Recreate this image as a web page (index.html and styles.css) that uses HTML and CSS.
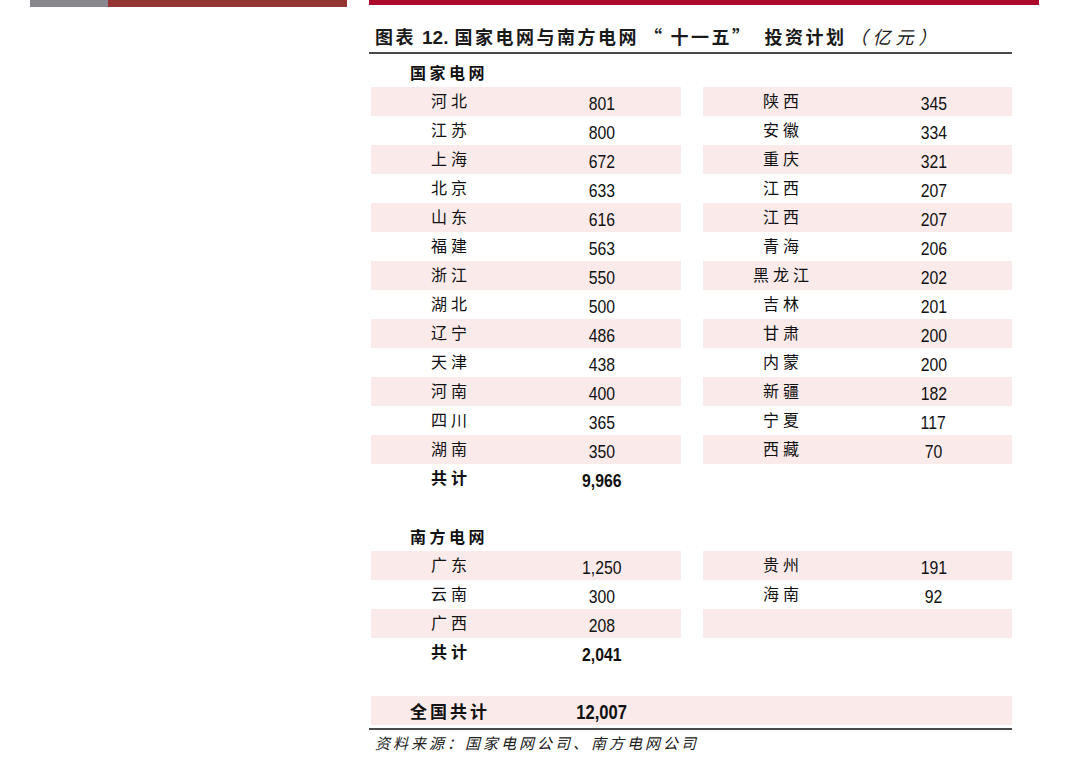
FILE: index.html
```html
<!DOCTYPE html>
<html lang="zh-CN">
<head>
<meta charset="utf-8">
<title>国家电网与南方电网“十一五”投资计划</title>
<link rel="stylesheet" href="styles.css">
</head>
<body>
<div class="page">
  <div class="side">
    <div class="side-bar"><span class="grey"></span><span class="brown"></span></div>
  </div>
  <div class="main">
    <div class="redbar"></div>
    <div class="content">
      <h1 class="title">图表<span class="fig">12.</span>国家电网与南方电网<span class="lq">“</span>十一五<span class="rq">”</span>投资计划<span class="unit">（亿元）</span></h1>
      <div class="table">
        <div class="row"><div class="group">国家电网</div></div>

        <div class="row"><div class="cell fill"><span class="name">河北</span><span class="val"><span>801</span></span></div><div class="cell fill"><span class="name">陕西</span><span class="val"><span>345</span></span></div></div>
        <div class="row"><div class="cell"><span class="name">江苏</span><span class="val"><span>800</span></span></div><div class="cell"><span class="name">安徽</span><span class="val"><span>334</span></span></div></div>
        <div class="row"><div class="cell fill"><span class="name">上海</span><span class="val"><span>672</span></span></div><div class="cell fill"><span class="name">重庆</span><span class="val"><span>321</span></span></div></div>
        <div class="row"><div class="cell"><span class="name">北京</span><span class="val"><span>633</span></span></div><div class="cell"><span class="name">江西</span><span class="val"><span>207</span></span></div></div>
        <div class="row"><div class="cell fill"><span class="name">山东</span><span class="val"><span>616</span></span></div><div class="cell fill"><span class="name">江西</span><span class="val"><span>207</span></span></div></div>
        <div class="row"><div class="cell"><span class="name">福建</span><span class="val"><span>563</span></span></div><div class="cell"><span class="name">青海</span><span class="val"><span>206</span></span></div></div>
        <div class="row"><div class="cell fill"><span class="name">浙江</span><span class="val"><span>550</span></span></div><div class="cell fill"><span class="name">黑龙江</span><span class="val"><span>202</span></span></div></div>
        <div class="row"><div class="cell"><span class="name">湖北</span><span class="val"><span>500</span></span></div><div class="cell"><span class="name">吉林</span><span class="val"><span>201</span></span></div></div>
        <div class="row"><div class="cell fill"><span class="name">辽宁</span><span class="val"><span>486</span></span></div><div class="cell fill"><span class="name">甘肃</span><span class="val"><span>200</span></span></div></div>
        <div class="row"><div class="cell"><span class="name">天津</span><span class="val"><span>438</span></span></div><div class="cell"><span class="name">内蒙</span><span class="val"><span>200</span></span></div></div>
        <div class="row"><div class="cell fill"><span class="name">河南</span><span class="val"><span>400</span></span></div><div class="cell fill"><span class="name">新疆</span><span class="val"><span>182</span></span></div></div>
        <div class="row"><div class="cell"><span class="name">四川</span><span class="val"><span>365</span></span></div><div class="cell"><span class="name">宁夏</span><span class="val"><span>117</span></span></div></div>
        <div class="row"><div class="cell fill"><span class="name">湖南</span><span class="val"><span>350</span></span></div><div class="cell fill"><span class="name">西藏</span><span class="val"><span>70</span></span></div></div>
        <div class="row"><div class="cell sum"><span class="name">共计</span><span class="val"><span>9,966</span></span></div><div class="cell"></div></div>
        <div class="row"></div>

        <div class="row"><div class="group">南方电网</div></div>
        <div class="row"><div class="cell fill"><span class="name">广东</span><span class="val"><span>1,250</span></span></div><div class="cell fill"><span class="name">贵州</span><span class="val"><span>191</span></span></div></div>
        <div class="row"><div class="cell"><span class="name">云南</span><span class="val"><span>300</span></span></div><div class="cell"><span class="name">海南</span><span class="val"><span>92</span></span></div></div>
        <div class="row"><div class="cell fill"><span class="name">广西</span><span class="val"><span>208</span></span></div><div class="cell fill"></div></div>
        <div class="row"><div class="cell sum"><span class="name">共计</span><span class="val"><span>2,041</span></span></div><div class="cell"></div></div>
        <div class="row"></div>

        <div class="row"><div class="cell fill grand"><span class="gname">全国共计</span><span class="val"><span>12,007</span></span></div></div>
      </div>
      <p class="source">资料来源：国家电网公司、南方电网公司</p>
    </div>
  </div>
</div>
</body>
</html>
```

FILE: styles.css
```css
html, body {
  margin: 0;
  padding: 0;
  background: #ffffff;
}

body {
  font-family: "Noto Sans CJK SC", "Liberation Sans", sans-serif;
  color: #111111;
}

.page {
  display: flex;
  padding-left: 30px;
}

.side {
  width: 317px;
  flex: none;
}

.side-bar {
  display: flex;
  height: 7px;
}

.side-bar .grey {
  width: 78px;
  background: #88878d;
}

.side-bar .brown {
  flex: 1;
  background: #953634;
}

.main {
  margin-left: 22px;
  width: 670px;
  flex: none;
}

.redbar {
  height: 5px;
  background: #ad0a2b;
}

.content {
  width: 643px;
}

.title {
  margin: 18px 0 0 0;
  padding: 0 0 1px 6px;
  height: 28px;
  overflow: hidden;
  font-size: 18px;
  font-weight: 700;
  line-height: 26px;
  letter-spacing: 2.5px;
  color: #1a1a1a;
  border-bottom: 2px solid #4a4a4a;
  white-space: nowrap;
}

.title .fig {
  font-family: "Liberation Sans", sans-serif;
  font-weight: 700;
  font-size: 19px;
  line-height: 20px;
  letter-spacing: 0;
  margin: 0 6px 0 6px;
}

.title .lq {
  margin-left: 5px;
  margin-right: 6px;
}

.title .rq {
  margin-left: 0;
  margin-right: 12px;
}

.title .unit {
  font-weight: 400;
  font-style: italic;
  letter-spacing: 5px;
  margin-left: 3px;
}

.table {
  margin-top: 4px;
  padding-left: 2px;
}

.row {
  display: grid;
  grid-template-columns: 310px 309px;
  column-gap: 22px;
  height: 29px;
}

.cell {
  display: grid;
  grid-template-columns: 156px 1fr;
  height: 29px;
}

.cell.fill {
  background: #faeaea;
}

.name {
  text-align: center;
  font-size: 16px;
  line-height: 26px;
  letter-spacing: 4px;
  padding-left: 4px;
}

.val {
  text-align: center;
  padding-right: 4px;
  font-family: "Liberation Sans", sans-serif;
  font-size: 19px;
  line-height: 33px;
  height: 29px;
}

.val span {
  display: inline-block;
  transform: scaleX(0.83);
}

.group {
  grid-column: 1 / -1;
  padding-left: 39px;
  font-size: 16px;
  font-weight: 700;
  line-height: 29px;
  letter-spacing: 3.5px;
}

.cell.sum .name {
  font-weight: 700;
}

.cell.sum .val {
  font-weight: 700;
}

.cell.grand {
  grid-column: 1 / -1;
  grid-template-columns: 156px 154px 1fr;
}

.gname {
  padding-left: 39px;
  font-size: 17px;
  font-weight: 700;
  line-height: 29px;
  letter-spacing: 3px;
  white-space: nowrap;
}

.cell.grand .val {
  font-weight: 700;
  font-size: 20px;
}

.source {
  margin: 3px 0 0 0;
  border-top: 2px solid #4a4a4a;
  padding: 4px 0 0 6px;
  font-size: 15px;
  font-style: italic;
  line-height: 18px;
  letter-spacing: 3px;
  color: #222222;
}
```
